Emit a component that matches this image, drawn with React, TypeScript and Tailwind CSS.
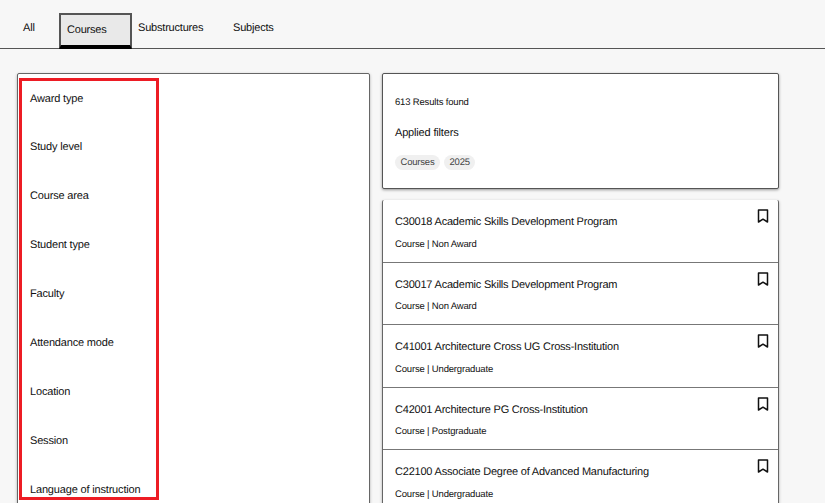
const filters = [
  "Award type",
  "Study level",
  "Course area",
  "Student type",
  "Faculty",
  "Attendance mode",
  "Location",
  "Session",
  "Language of instruction",
];

const results = [
  { title: "C30018 Academic Skills Development Program", meta: "Course | Non Award" },
  { title: "C30017 Academic Skills Development Program", meta: "Course | Non Award" },
  { title: "C41001 Architecture Cross UG Cross-Institution", meta: "Course | Undergraduate" },
  { title: "C42001 Architecture PG Cross-Institution", meta: "Course | Postgraduate" },
  { title: "C22100 Associate Degree of Advanced Manufacturing", meta: "Course | Undergraduate" },
];

function BookmarkIcon() {
  return (
    <svg width="12" height="14" viewBox="0 0 12 14" fill="none" stroke="#111" strokeWidth="1.5" className="mt-[9px] mr-[9px] shrink-0">
      <path d="M1.5 1h9v12L6 10.2 1.5 13z" strokeLinejoin="round" />
    </svg>
  );
}

export default function App() {
  return (
    <div className="h-[503px] overflow-hidden bg-[#f7f7f7] text-[#111] font-['Liberation_Sans',Arial,sans-serif] [text-rendering:geometricPrecision]">
      <nav className="flex h-[49px] items-start border-b border-[#555] text-[11px] tracking-[-0.2px]">
        <div className="pl-[23px] pt-[20px] w-[59px]">All</div>
        <div className="mt-[13px] h-[36px] w-[73px] border-2 border-[#555] border-b-[4px] border-b-black bg-[#e9e9e9] pl-[6px] pt-[7px]">Courses</div>
        <div className="pl-[6px] pt-[20px] w-[101px]">Substructures</div>
        <div className="pt-[20px]">Subjects</div>
      </nav>

      <main className="flex items-start gap-[12px] pl-[17px] pt-[24px]">
        <section className="relative h-[460px] w-[353px] rounded-[2px] border border-[#666] bg-white shadow-[0_1px_3px_rgba(0,0,0,0.3)]">
          <ul className="pl-[12px] pt-[18.5px] text-[11px] tracking-[-0.17px]">
            {filters.map((f) => (
              <li key={f} className="h-[48.9px] leading-[13px]">{f}</li>
            ))}
          </ul>
          <div className="pointer-events-none absolute left-[1px] top-[4px] h-[422px] w-[140px] border-[3px] border-[#ed1c24]" />
        </section>

        <div className="w-[397px]">
          <section className="h-[116px] rounded-[2px] border border-[#555] bg-white px-[12px] pt-[23px] shadow-[0_1px_3px_rgba(0,0,0,0.4)]">
            <p className="text-[9.5px] leading-[11px] tracking-[-0.17px]">613 Results found</p>
            <h2 className="mt-[19px] text-[11px] leading-[13px] tracking-[-0.17px]">Applied filters</h2>
            <div className="mt-[15px] flex gap-[4px] text-[9.5px] leading-[15px] tracking-[-0.2px] text-[#444]">
              <span className="rounded-full bg-[#f0f0f0] px-[5.5px]">Courses</span>
              <span className="rounded-full bg-[#f0f0f0] px-[5.5px]">2025</span>
            </div>
          </section>

          <section className="mt-[11px] rounded-[2px] border-x border-[#666] bg-white shadow-[0_1px_3px_rgba(0,0,0,0.3)]">
            {results.map((r) => (
              <article key={r.title} className="flex h-[62.6px] justify-between border-b border-[#777] pl-[12px]">
                <div>
                  <h3 className="pt-[15px] text-[11px] leading-[14px] tracking-[-0.21px]">{r.title}</h3>
                  <p className="mt-[9.5px] text-[9.5px] leading-[11px] tracking-[-0.17px]">{r.meta}</p>
                </div>
                <BookmarkIcon />
              </article>
            ))}
          </section>
        </div>
      </main>
    </div>
  );
}
